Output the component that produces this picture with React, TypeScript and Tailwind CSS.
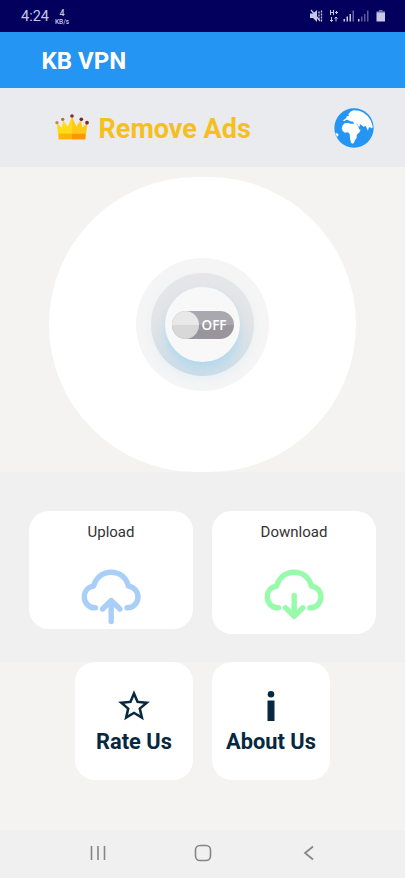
import type { ReactNode } from "react";
import { MdStarBorder } from "react-icons/md";

const NAVY = "#062840";

function StatusBar() {
    return (
        <div className="flex h-8 items-center justify-between bg-[#02005c] pl-[21px] pr-5 text-[#c9c7e6]">
            <div className="flex items-center gap-[6px] pt-[2px]">
                <span className="text-[14.5px] leading-none">4:24</span>
                <div className="flex flex-col items-center font-medium">
                    <span className="text-[9px] leading-[9px]">4</span>
                    <span className="text-[6.5px] leading-[8px]">KB/s</span>
                </div>
            </div>

            <svg width="75" height="14" viewBox="0 0 75 14" fill="currentColor">
                {/* Muted */}
                <path d="M0 4.500h3l4-3.500v12L3 9H0z" />
                <path d="M1 1l9 11" stroke="currentColor" strokeWidth="1.300" />
                <path d="M9 2.500v9M11.500 1.500v11" stroke="currentColor" strokeWidth="1.300" strokeDasharray="2 1" />
                {/* H+ data */}
                <path d="M20.500 1v5M23.500 1v5M20.500 3.500h3M25 3.500h3M26.500 2v3" stroke="currentColor" strokeWidth="1" fill="none" />
                <path d="M21.500 8v4.500M20 11l1.500 1.500L23 11M26 12.500V8M24.500 9.500L26 8l1.500 1.500" stroke="currentColor" strokeWidth="1" fill="none" />
                {/* Signal bars */}
                <path d="M33.500 10H35v2.500h-1.500zM36.500 7.500H38v5h-1.500zM39.500 5H41v7.500h-1.500z" />
                <path d="M42.500 1.500H44v11h-1.500z" opacity=".5" />
                <path d="M48 10h1.500v2.500H48z" />
                <path d="M51 7.500h1.500v5H51zM54 5h1.500v7.500H54zM57 1.500h1.500v11H57z" opacity=".45" />
                {/* Battery */}
                <path d="M69 1h3.500v1.500H69z" opacity=".6" />
                <path d="M66.500 2.500H75V4h-8.500z" opacity=".75" />
                <path d="M66.500 4H75v8.500h-8.500z" />
            </svg>
        </div>
    );
}

function Crown() {
    return (
        <svg width="34" height="26" viewBox="0 0 102 78" className="mb-px shrink-0">
            <path d="M11 76L5 27l15 14 5-22 13 19L51 9l13 29 13-19 5 22 15-14-6 49z" fill="#ffda16" />
            <path d="M51 9l13 29 13-19 5 22 15-14-6 49H51z" fill="#ffc916" />
            <path d="M11 59h40v17H11z" fill="#ffb409" />
            <path d="M51 59h40v17H51z" fill="#ff940c" />
            <circle cx="6" cy="26" r="5" fill="#c48a49" />
            <circle cx="23" cy="16" r="5" fill="#b86b40" />
            <circle cx="51" cy="6" r="5.500" fill="#8c2739" />
            <circle cx="79" cy="16" r="5.500" fill="#812338" />
            <circle cx="96" cy="26" r="5.500" fill="#812338" />
        </svg>
    );
}

function Globe() {
    return (
        <svg width="40" height="40" viewBox="42 38 120 120">
            <circle cx="102" cy="98" r="59" fill="#2495f2" />
            {/* Europe, Asia and Africa */}
            <path
                d="M79 68l1-5 7-2-2-4 6-8 9-4 18 1 13 6 12 10 9 13 5 14 1 8-5 2-3-5-4 4-2 8-4-7-3-7-6 2-6-4-6-4 1 5-4 5 1 6 5 1-3 7-9 9v9l-5 6-3 8-5 3-4-3-3-13-1-13-5-5-9 1-7-5-3-8 3-9 6-6 10-2 6 3 12 0-2-6-10-1-7-5-6 1-2 3-7-1z"
                fill="#fff"
            />
            <path d="M110 84l7 12 2 4" stroke="#2495f2" strokeWidth="1.500" fill="none" />
            <path d="M46 112l8 3 2 4-5 6z" fill="#fff" />
        </svg>
    );
}

function PowerSwitch() {
    return (
        <button className="flex h-[295px] w-[307px] items-center justify-center rounded-full bg-white">
            <span className="flex size-[133px] items-center justify-center rounded-full bg-[#f5f5f5]">
                <span className="flex size-[103px] items-center justify-center rounded-full bg-linear-to-b from-[#e6e6e9] via-[#e1e4e7] to-[#cbdde8] shadow-[0_4px_8px_rgba(205,232,245,0.3)]">
                    <span className="flex size-[75px] items-center justify-center rounded-full bg-[#f8f8f8] shadow-[0_6px_10px_rgba(165,214,240,0.7)]">
                        <span className="flex h-7 w-[62px] items-center overflow-hidden rounded-full bg-linear-to-b from-[#aaa8af] from-50% to-[#98959d] to-50%">
                            <span className="h-7 w-[27px] shrink-0 rounded-r-[14px] bg-linear-to-b from-[#e8e8e8] from-50% to-[#d8d8d8] to-50%" />
                            <span className="ml-[3px] pt-[2px] font-['Open_Sans',sans-serif] text-[13.5px] font-semibold leading-none text-white">OFF</span>
                        </span>
                    </span>
                </span>
            </span>
        </button>
    );
}

function Cloud({ color, arrow }: { color: string; arrow: string }) {
    return (
        <svg
            width="60"
            height="58"
            viewBox="0 0 60 58"
            fill="none"
            stroke={color}
            strokeWidth="5.400"
            strokeLinecap="round"
            strokeLinejoin="round"
        >
            <path d="M14.500 38.800C8 39 3.300 34 3.300 28c0-5.500 3.700-10 9.200-10.800C15 9 21 3.200 30.200 3.200S45.300 9 47.500 17.200C53 18 57 22.500 57 28c0 6-5 11-11 10.800" />
            <path d={arrow} />
        </svg>
    );
}

function SmallCard({ label, children }: { label: string; children: ReactNode }) {
    return (
        <button className="flex size-[118px] flex-col items-center rounded-[20px] bg-white pt-[26px] text-[#062840]">
            <span className="flex h-9 items-center justify-center">{children}</span>
            <span className="mt-[6px] whitespace-nowrap text-[21.8px] font-bold leading-6">{label}</span>
        </button>
    );
}

export default function App() {
    return (
        <div className="flex h-[878px] w-[405px] flex-col overflow-hidden bg-[#f4f3f2] font-[Roboto,sans-serif]">
            <StatusBar />

            <header className="flex h-14 items-center bg-[#2495f2] pl-[41.5px]">
                <h1 className="pt-[2px] text-[24px] font-bold leading-none text-white">KB VPN</h1>
            </header>

            {/* Remove ads banner */}
            <div className="flex h-[79px] shrink-0 items-center justify-between bg-[#e9ebee] pl-[55px] pr-[31px]">
                <div className="flex items-center gap-[9.5px]">
                    <Crown />
                    <span className="pt-1 text-[27px] font-bold leading-none text-[#f5c01e]">Remove Ads</span>
                </div>
                <Globe />
            </div>

            <main className="flex h-[305px] shrink-0 items-end justify-center">
                <PowerSwitch />
            </main>

            {/* Traffic */}
            <section className="flex h-[190px] shrink-0 items-start justify-center gap-[19px] bg-[#f0f0f0] pt-[39px]">
                <div className="flex h-[118px] w-[164px] flex-col items-center rounded-[20px] bg-white pt-[11px] text-[15px] leading-5 text-[#333]">
                    Upload
                    <div className="mt-[27px]">
                        <Cloud color="#a9cff8" arrow="M30.200 52.500V31.500M21.500 40l8.700-8.500 8.700 8.500" />
                    </div>
                </div>
                <div className="flex h-[123px] w-[164px] flex-col items-center rounded-[20px] bg-white pt-[11px] text-[15px] leading-5 text-[#333]">
                    Download
                    <div className="mt-[27px]">
                        <Cloud color="#98faab" arrow="M30.200 26.500V47M21.500 38.800l8.700 8.500 8.700-8.500" />
                    </div>
                </div>
            </section>

            <div className="flex flex-1 items-start justify-center gap-[19px]">
                <SmallCard label="Rate Us">
                    <MdStarBorder size={38} />
                </SmallCard>
                <SmallCard label="About Us">
                    <svg width="8" height="30" viewBox="0 0 8 30" fill={NAVY}>
                        <circle cx="4" cy="3.300" r="3.300" />
                        <path d="M.5 9.500h7V30h-7z" />
                    </svg>
                </SmallCard>
            </div>

            {/* System navigation */}
            <nav className="grid h-12 shrink-0 grid-cols-3 items-center justify-items-center bg-[#f0f0f0] px-[45px] pb-[2px] text-[#858585]">
                <svg width="16" height="16" viewBox="0 0 16 16" stroke="currentColor" strokeWidth="1.600">
                    <path d="M1.500 1v14M8 1v14M14.500 1v14" />
                </svg>
                <svg width="18" height="18" viewBox="0 0 18 18" fill="none" stroke="currentColor" strokeWidth="1.600">
                    <rect x="1.500" y="1.500" width="15" height="15" rx="4.500" />
                </svg>
                <svg width="16" height="16" viewBox="0 0 16 16" fill="none" stroke="currentColor" strokeWidth="1.700">
                    <path d="M13 1.500L5 8l8 6.500" />
                </svg>
            </nav>
        </div>
    );
}
